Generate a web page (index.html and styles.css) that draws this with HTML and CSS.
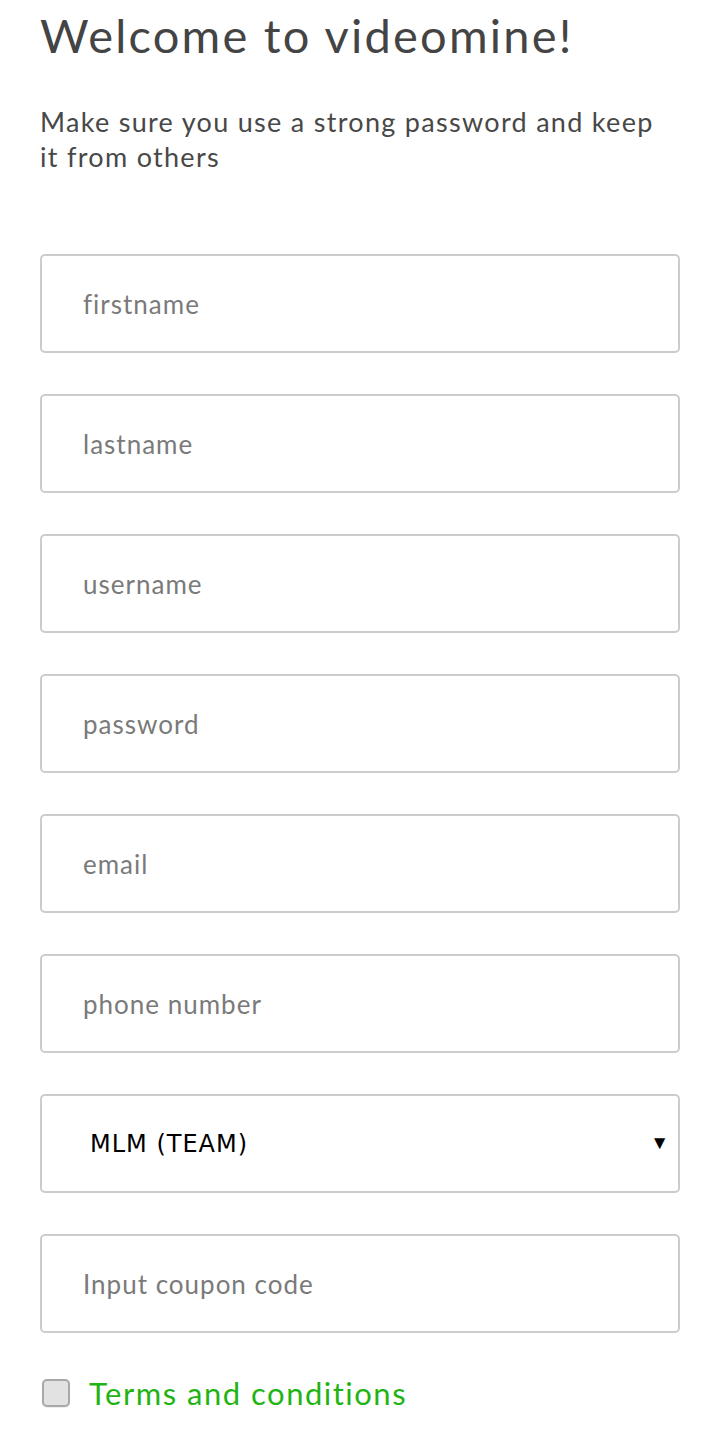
FILE: index.html
```html
<!DOCTYPE html>
<html lang="en">
<head>
<meta charset="utf-8">
<title>Welcome to videomine!</title>
<link rel="stylesheet" href="styles.css">
</head>
<body>
<main class="page">
  <h1 class="title">Welcome to videomine!</h1>
  <p class="lead">Make sure you use a strong password and keep it from others</p>
  <form class="form">
    <input class="field" type="text" placeholder="firstname">
    <input class="field" type="text" placeholder="lastname">
    <input class="field" type="text" placeholder="username">
    <input class="field" type="password" placeholder="password">
    <input class="field" type="email" placeholder="email">
    <input class="field" type="tel" placeholder="phone number">
    <div class="select-wrap">
      <select class="field select">
        <option>MLM (TEAM)</option>
      </select>
      <span class="arrow">▼</span>
    </div>
    <input class="field" type="text" placeholder="Input coupon code">
    <label class="terms">
      <span class="box"></span>
      <span class="terms-text">Terms and conditions</span>
    </label>
  </form>
</main>
</body>
</html>
```

FILE: styles.css
```css
html, body {
  margin: 0;
  padding: 0;
  background: #ffffff;
}

.page {
  padding: 0 39px 0 40px;
  font-family: "Lato", "Noto Sans", sans-serif;
  color: #444444;
}

.title {
  margin: 0;
  padding-top: 7px;
  font-size: 47px;
  font-weight: 400;
  line-height: 56px;
  color: #444444;
  letter-spacing: 2.2px;
}

.lead {
  margin: 41px 0 0 0;
  max-width: 636px;
  font-size: 27px;
  line-height: 35px;
  color: #484848;
  letter-spacing: 1.3px;
}

.form {
  margin-top: 80px;
  display: flex;
  flex-direction: column;
  gap: 41px;
}

.field {
  box-sizing: border-box;
  width: 640px;
  height: 99px;
  margin: 0;
  padding: 0 0 0 41px;
  border: 2px solid #cccccc;
  border-radius: 5px;
  background: #ffffff;
  font-family: "Lato", "Noto Sans", sans-serif;
  font-size: 26px;
  letter-spacing: 1px;
  color: #444444;
  outline: none;
}

.field::placeholder {
  color: #7a7a7a;
  opacity: 1;
}

.select-wrap {
  position: relative;
  width: 640px;
}

.select {
  -webkit-appearance: none;
  appearance: none;
  padding-left: 48px;
  font-family: "DejaVu Sans", sans-serif;
  font-size: 24px;
  letter-spacing: 1px;
  color: #000000;
}

.arrow {
  position: absolute;
  right: 11px;
  top: 36px;
  font-size: 19px;
  line-height: 24px;
  color: #000000;
  pointer-events: none;
}

.terms {
  display: flex;
  align-items: center;
  gap: 19px;
  margin-top: -1px;
  padding-left: 2px;
}

.box {
  box-sizing: border-box;
  width: 28px;
  height: 28px;
  border: 2px solid #a8a8a8;
  border-radius: 5px;
  background: #e2e2e2;
  box-shadow: 0 1px 1px rgba(0, 0, 0, 0.08);
}

.terms-text {
  font-size: 31px;
  line-height: 40px;
  letter-spacing: 1.5px;
  color: #1fb414;
}
```
